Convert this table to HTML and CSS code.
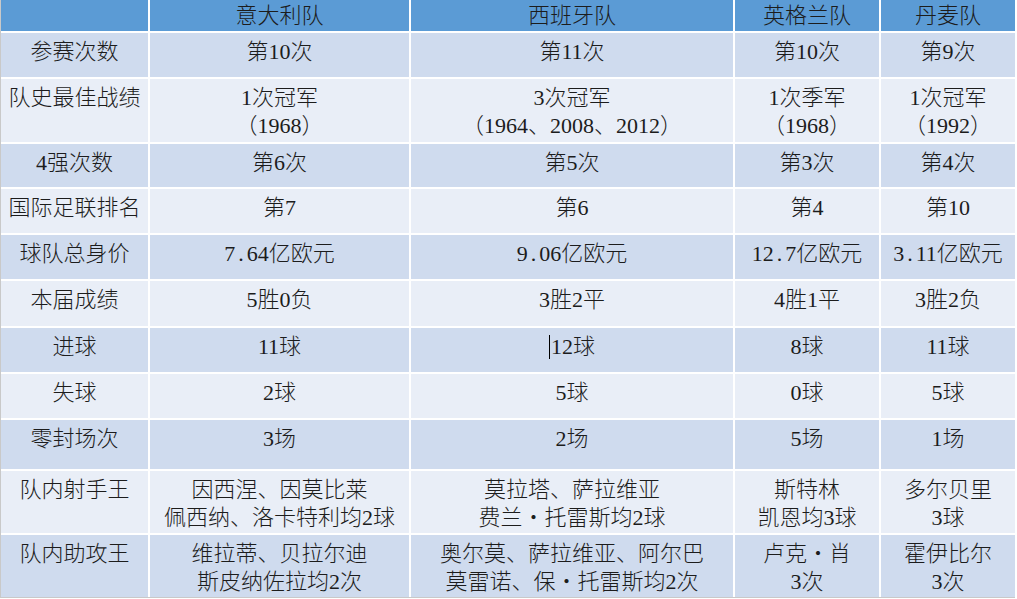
FILE: index.html
```html
<!DOCTYPE html>
<html lang="zh-CN">
<head>
<meta charset="utf-8">
<title>欧洲杯四强对比</title>
<link rel="stylesheet" href="styles.css">
</head>
<body>
<div class="table">
  <div class="row head">
    <div class="cell"></div>
    <div class="cell">意大利队</div>
    <div class="cell">西班牙队</div>
    <div class="cell">英格兰队</div>
    <div class="cell">丹麦队</div>
  </div>
  <div class="row dark h44">
    <div class="cell">参赛次数</div>
    <div class="cell">第10次</div>
    <div class="cell">第11次</div>
    <div class="cell">第10次</div>
    <div class="cell">第9次</div>
  </div>
  <div class="row light h63">
    <div class="cell">队史最佳战绩</div>
    <div class="cell">1次冠军<br>（1968）</div>
    <div class="cell">3次冠军<br>（1964、2008、2012）</div>
    <div class="cell">1次季军<br>（1968）</div>
    <div class="cell">1次冠军<br>（1992）</div>
  </div>
  <div class="row dark h43">
    <div class="cell">4强次数</div>
    <div class="cell">第6次</div>
    <div class="cell">第5次</div>
    <div class="cell">第3次</div>
    <div class="cell">第4次</div>
  </div>
  <div class="row light h44">
    <div class="cell">国际足联排名</div>
    <div class="cell">第7</div>
    <div class="cell">第6</div>
    <div class="cell">第4</div>
    <div class="cell">第10</div>
  </div>
  <div class="row dark h44">
    <div class="cell">球队总身价</div>
    <div class="cell">7<span class="dot">.</span>64亿欧元</div>
    <div class="cell">9<span class="dot">.</span>06亿欧元</div>
    <div class="cell">12<span class="dot">.</span>7亿欧元</div>
    <div class="cell">3<span class="dot">.</span>11亿欧元</div>
  </div>
  <div class="row light h45">
    <div class="cell">本届成绩</div>
    <div class="cell">5胜0负</div>
    <div class="cell">3胜2平</div>
    <div class="cell">4胜1平</div>
    <div class="cell">3胜2负</div>
  </div>
  <div class="row dark h44">
    <div class="cell">进球</div>
    <div class="cell">11球</div>
    <div class="cell"><span class="caret"></span>12球</div>
    <div class="cell">8球</div>
    <div class="cell">11球</div>
  </div>
  <div class="row light h44">
    <div class="cell">失球</div>
    <div class="cell">2球</div>
    <div class="cell">5球</div>
    <div class="cell">0球</div>
    <div class="cell">5球</div>
  </div>
  <div class="row dark h49">
    <div class="cell">零封场次</div>
    <div class="cell">3场</div>
    <div class="cell">2场</div>
    <div class="cell">5场</div>
    <div class="cell">1场</div>
  </div>
  <div class="row light h62">
    <div class="cell">队内射手王</div>
    <div class="cell">因西涅、因莫比莱<br>佩西纳、洛卡特利均2球</div>
    <div class="cell">莫拉塔、萨拉维亚<br>费兰・托雷斯均2球</div>
    <div class="cell">斯特林<br>凯恩均3球</div>
    <div class="cell">多尔贝里<br>3球</div>
  </div>
  <div class="row dark h62">
    <div class="cell">队内助攻王</div>
    <div class="cell">维拉蒂、贝拉尔迪<br>斯皮纳佐拉均2次</div>
    <div class="cell">奥尔莫、萨拉维亚、阿尔巴<br>莫雷诺、保・托雷斯均2次</div>
    <div class="cell">卢克・肖<br>3次</div>
    <div class="cell">霍伊比尔<br>3次</div>
  </div>
</div>
</body>
</html>
```

FILE: styles.css
```css
html, body {
  margin: 0;
  padding: 0;
  background: #ffffff;
}

body {
  width: 1017px;
  height: 599px;
  overflow: hidden;
  font-family: "Liberation Serif", "Noto Sans CJK SC", serif;
  font-size: 22px;
  font-weight: 300;
  color: #1c1c1c;
}

.table {
  width: 1014px;
  border-left: 1px solid #c9c9c9;
  border-bottom: 1px solid #c9c9c9;
  display: flex;
  flex-direction: column;
  gap: 2px;
  background: #ffffff;
}

.row {
  display: grid;
  grid-template-columns: 147px 259px 322px 144px 134px;
  column-gap: 2px;
  height: 44px;
}

.cell {
  text-align: center;
  line-height: 28px;
  padding-top: 5px;
  box-sizing: border-box;
  white-space: nowrap;
}

.head {
  height: 31px;
}

.head .cell {
  background: #5b9bd5;
  padding-top: 1px;
  line-height: 30px;
}

.dark .cell {
  background: #cfdbee;
}

.light .cell {
  background: #e9eef7;
}

.h43 { height: 43px; }
.h44 { height: 44px; }
.h45 { height: 45px; }
.h49 { height: 49px; }
.h62 { height: 62px; }
.h63 { height: 63px; }

.dot {
  padding: 0 3px;
}

.caret {
  display: inline-block;
  width: 1px;
  height: 24px;
  background: #000000;
  vertical-align: -5px;
  margin-right: 1px;
}
```
